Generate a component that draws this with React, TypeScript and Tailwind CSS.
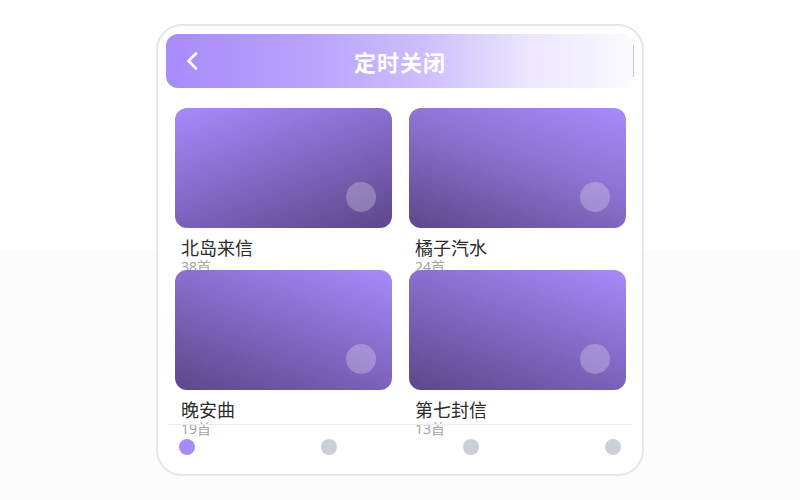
import React from "react";

const cards = [
  { title: "北岛来信", count: "38首", grad: "bg-[linear-gradient(160deg,#a78bfa_0%,#8a6fd0_40%,#5c4789_100%)]" },
  { title: "橘子汽水", count: "24首", grad: "bg-[linear-gradient(200deg,#a78bfa_0%,#8c72d0_45%,#5c4789_100%)]" },
  { title: "晚安曲", count: "19首", grad: "bg-[linear-gradient(20deg,#5c4789_0%,#8a6fd0_60%,#a78bfa_100%)]" },
  { title: "第七封信", count: "13首", grad: "bg-[linear-gradient(20deg,#5c4789_0%,#866cc9_55%,#a78bfa_100%)]" },
];

export default function App() {
  return (
    <div
      className="h-[500px] w-full flex items-center justify-center bg-[linear-gradient(to_bottom,#ffffff_50%,#fcfcfd_50%)]"
      style={{ fontFamily: '"Noto Sans", "Noto Sans CJK SC", sans-serif' }}
    >
      <div className="w-[488px] h-[452px] border-2 border-[#e6e6ec] rounded-[26px] bg-white p-2 flex flex-col">
        <div className="h-[54px] shrink-0 rounded-xl grid grid-cols-[1fr_auto_1fr] items-center bg-[linear-gradient(to_right,#a78bfa_0%,#b8a2fb_30%,#cdbefc_55%,#ece6fe_78%,#fbfaff_100%)]">
          <svg width="14" height="20" viewBox="0 0 14 20" fill="none" className="block ml-[19px]">
            <path d="M11 2.5 L3.5 10 L11 17.5" stroke="white" strokeWidth="2.6" strokeLinecap="round" strokeLinejoin="round" />
          </svg>
          <div className="text-white font-bold text-[22px] leading-none tracking-[1px]" style={{ fontFamily: '"Noto Sans CJK SC", sans-serif' }}>
            定时关闭
          </div>
          <div className="justify-self-end w-[1.5px] h-8 bg-[#c9b9fc]" />
        </div>

        <div className="flex-1 min-h-0 pt-5 pl-[9px] pr-[8px]">
          <div className="grid grid-cols-[217px_217px] gap-x-[17px] auto-rows-[162px]">
            {cards.map((c) => (
              <div key={c.title} className="h-[162px]">
                <div className={`relative h-[120px] rounded-xl ${c.grad}`}>
                  <div className="absolute right-4 bottom-4 w-[30px] h-[30px] rounded-full bg-white/25" />
                </div>
                <div className="px-1.5 pt-2">
                  <div className="text-[18px] leading-[22px] text-[#2b2b2b]" style={{ fontFamily: '"Noto Sans CJK SC", sans-serif' }}>
                    {c.title}
                  </div>
                  <div className="text-[14px] leading-[18px] text-[#a3a6ad]" style={{ fontFamily: '"Noto Sans", "Noto Sans CJK SC", sans-serif' }}>
                    {c.count}
                  </div>
                </div>
              </div>
            ))}
          </div>
        </div>

        <div className="shrink-0 mx-[2px] border-t border-[#ececf0] h-[42px] px-[11px] pt-[14px] flex justify-between items-start relative">
          <div className="w-4 h-4 rounded-full bg-[#a78bfa]" />
          <div className="w-4 h-4 rounded-full bg-[#cbd0d7]" />
          <div className="w-4 h-4 rounded-full bg-[#cbd0d7]" />
          <div className="w-4 h-4 rounded-full bg-[#cbd0d7]" />
        </div>
      </div>
    </div>
  );
}
